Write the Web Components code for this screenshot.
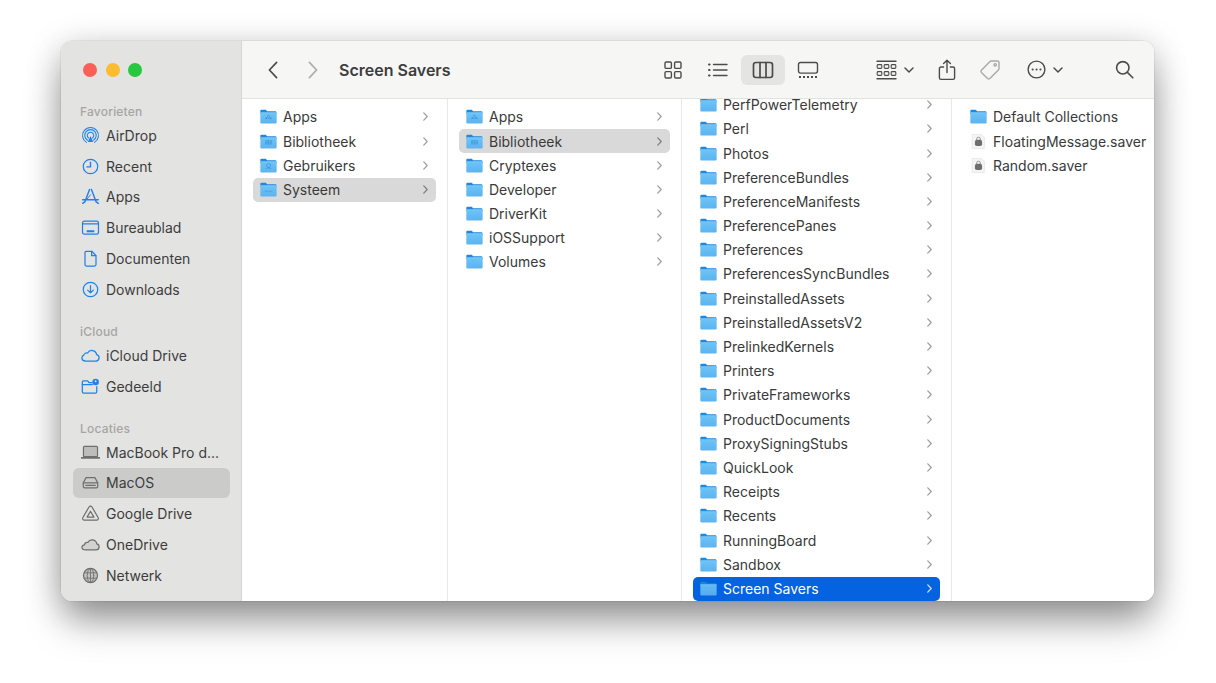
<!DOCTYPE html>
<html lang="nl">
<head>
<meta charset="utf-8">
<title>Screen Savers</title>
<style>
  html, body { margin: 0; height: 100%; background: #fff; overflow: hidden; }
  body { padding: 41px 0 0 61px; box-sizing: border-box; font-family: Inter, "Liberation Sans", sans-serif; }
</style>
</head>
<body>
<finder-window>
  <finder-sidebar slot="sidebar">
    <side-label first>Favorieten</side-label>
    <side-item icon="airdrop">AirDrop</side-item>
    <side-item icon="recent">Recent</side-item>
    <side-item icon="apps">Apps</side-item>
    <side-item icon="desktop">Bureaublad</side-item>
    <side-item icon="document">Documenten</side-item>
    <side-item icon="download">Downloads</side-item>
    <side-label>iCloud</side-label>
    <side-item icon="cloud">iCloud Drive</side-item>
    <side-item icon="shared">Gedeeld</side-item>
    <side-label>Locaties</side-label>
    <side-item icon="laptop" gray>MacBook Pro d...</side-item>
    <side-item icon="drive" gray selected>MacOS</side-item>
    <side-item icon="gdrive" gray>Google Drive</side-item>
    <side-item icon="onedrive" gray>OneDrive</side-item>
    <side-item icon="globe" gray>Netwerk</side-item>
  </finder-sidebar>
  <finder-toolbar slot="toolbar" title="Screen Savers"></finder-toolbar>
  <finder-column slot="columns" style="width:206px">
    <column-row glyph="apps">Apps</column-row>
    <column-row glyph="lib">Bibliotheek</column-row>
    <column-row glyph="user">Gebruikers</column-row>
    <column-row glyph="sys" selected="gray">Systeem</column-row>
  </finder-column>
  <finder-column slot="columns" style="width:234px">
    <column-row glyph="apps">Apps</column-row>
    <column-row glyph="lib" selected="gray">Bibliotheek</column-row>
    <column-row>Cryptexes</column-row>
    <column-row>Developer</column-row>
    <column-row>DriverKit</column-row>
    <column-row>iOSSupport</column-row>
    <column-row>Volumes</column-row>
  </finder-column>
  <finder-column slot="columns" style="width:270px" scrolled>
    <column-row>PerfPowerTelemetry</column-row>
    <column-row>Perl</column-row>
    <column-row>Photos</column-row>
    <column-row>PreferenceBundles</column-row>
    <column-row>PreferenceManifests</column-row>
    <column-row>PreferencePanes</column-row>
    <column-row>Preferences</column-row>
    <column-row>PreferencesSyncBundles</column-row>
    <column-row>PreinstalledAssets</column-row>
    <column-row>PreinstalledAssetsV2</column-row>
    <column-row>PrelinkedKernels</column-row>
    <column-row>Printers</column-row>
    <column-row>PrivateFrameworks</column-row>
    <column-row>ProductDocuments</column-row>
    <column-row>ProxySigningStubs</column-row>
    <column-row>QuickLook</column-row>
    <column-row>Receipts</column-row>
    <column-row>Recents</column-row>
    <column-row>RunningBoard</column-row>
    <column-row>Sandbox</column-row>
    <column-row selected="blue">Screen Savers</column-row>
  </finder-column>
  <finder-column slot="columns" last>
    <column-row leaf>Default Collections</column-row>
    <column-row leaf file>FloatingMessage.saver</column-row>
    <column-row leaf file>Random.saver</column-row>
  </finder-column>
</finder-window>

<script>
// sidebar + toolbar glyphs, all on a 20x20 box, stroke = currentColor
const ICONS = {
  airdrop: `<g fill="none" stroke-width="1.1"><path d="M5.8 17.200a8.400 8.400 0 1 1 8.400 0"/><path d="M7 15a6 6 0 1 1 6 0"/><path d="M8.200 12.800a3.400 3.400 0 1 1 3.600 0"/></g><path d="M10 10.400l2.800 6.400H7.200z" fill="currentColor" stroke="none"/>`,
  recent: `<circle cx="10" cy="10" r="7.600"/><path d="M10 5.400V10.400H6.200" stroke-width="1.500"/>`,
  apps: `<path d="M9 2.600L4 15.800M11 2.600l5 13.200M1.800 13.400h16.400M1.800 17.200l2.400-1.800M18.200 17.200l-2.400-1.800" stroke-width="1.500"/><path d="M5.800 13.400L10 8.200" stroke-width="1"/>`,
  desktop: `<rect x="1.600" y="3.200" width="16.800" height="13.800" rx="2"/><path d="M1.600 6.200h16.800"/><path d="M6 14h8" stroke-width="2.200" stroke-linecap="butt"/>`,
  document: `<path d="M5.400 2.400h6L15.800 7v9.400a1.600 1.600 0 0 1-1.600 1.600H5.800a1.600 1.600 0 0 1-1.600-1.600V3.600a1.200 1.200 0 0 1 1.200-1.200z"/><path d="M11.200 2.600V7h4.400"/>`,
  download: `<circle cx="10" cy="10" r="7.600"/><path d="M10 5.800v7.600M7 10.600l3 3 3-3"/>`,
  cloud: `<path d="M5 15.800h10.600a3.400 3.400 0 0 0 .8-6.700 5 5 0 0 0-9.400-1.700A3.200 3.200 0 0 0 3 9.600a3.100 3.100 0 0 0-2 2.900c0 1.900 1.800 3.300 4 3.300z"/>`,
  shared: `<path d="M11.800 6H8.400L7 4.200H2.800A1.400 1.400 0 0 0 1.400 5.600v10A1.400 1.400 0 0 0 2.800 17h12.400a1.400 1.400 0 0 0 1.400-1.400V10"/><path d="M1.400 8h10.600"/><circle cx="15.400" cy="5.200" r="3.400" fill="currentColor" stroke="none"/><circle cx="15.400" cy="4.500" r="1" fill="#e3e3e2" stroke="none"/>`,
  laptop: `<rect x="2.600" y="3.600" width="14.800" height="10.800" rx="1" fill="#bdbdbc"/><path d="M.6 15.600h18.800" stroke-width="1.800"/>`,
  drive: `<path d="M5.400 4.800h9.200l3 5.600v3.800a1.400 1.400 0 0 1-1.400 1.400H3.800a1.400 1.400 0 0 1-1.400-1.400v-3.800z"/><path d="M2.600 10.400h14.800"/><path d="M5 13h10" stroke-width="1.300"/>`,
  gdrive: `<path d="M8.400 3.200a1.800 1.800 0 0 1 3.200 0l6.400 11a1.800 1.800 0 0 1-1.600 2.800H3.600A1.800 1.800 0 0 1 2 14.200z"/><path d="M10 7.600l3.600 6.200H6.400z"/>`,
  onedrive: `<path d="M5 15.600h11a3.200 3.200 0 0 0 .6-6.300 5 5 0 0 0-9.400-1.500 3.200 3.200 0 0 0-3.600 2.500A2.800 2.800 0 0 0 1 12.800c0 1.600 1.600 2.800 4 2.800z" fill="#d2d2d1"/>`,
  globe: `<circle cx="10" cy="10" r="7.400" fill="#c2c2c1"/><ellipse cx="10" cy="10" rx="3.400" ry="7.400" stroke-width=".9"/><path d="M3.400 7.200h13.200M3.400 12.800h13.200M10 2.800v14.400" stroke-width=".9"/>`,
  back: `<path d="M8.600 2.400L1.400 10l7.200 7.600"/>`,
  forward: `<path d="M1.400 2.400L8.600 10l-7.200 7.600"/>`
}

// faint marks printed on some of the root folders
const FOLDER_GLYPHS = {
  apps: `<path d="M10 7l-3 5.400M10 7l3 5.400M6 11h8" stroke="#2a86d0" stroke-width=".8" fill="none" opacity=".75"/>`,
  lib: `<path d="M6 8h8M6 10h8M6 12h8M7 8v4M10 8v4M13 8v4" stroke="#2a86d0" stroke-width=".7" fill="none" opacity=".75"/>`,
  user: `<circle cx="10" cy="9" r="2.400" stroke="#2a86d0" stroke-width=".8" fill="none" opacity=".8"/><path d="M7 13c1-1.600 5-1.600 6 0" stroke="#2a86d0" stroke-width=".8" fill="none" opacity=".8"/>`,
  sys: `<path d="M5.500 11h9" stroke="#2a86d0" stroke-width="1" stroke-dasharray="1 .6" fill="none" opacity=".75"/>`
}

class FinderWindow extends HTMLElement {
  constructor() {
    super()
    this.attachShadow({ mode: 'open' }).innerHTML = `
      <style>
        :host {
          display: flex;
          width: 1093px;
          height: 560px;
          border-radius: 11px;
          background: #fff;
          box-shadow: 0 24px 38px -4px rgba(0,0,0,.34), 0 6px 34px rgba(0,0,0,.22), 0 0 0 .5px rgba(0,0,0,.1);
        }
        .frame { display: flex; width: 100%; height: 100%; border-radius: 11px; overflow: hidden; }
        .main { flex: 1; min-width: 0; display: flex; flex-direction: column; }
        .columns { flex: 1; min-height: 0; display: flex; }
      </style>
      <div class="frame">
        <slot name="sidebar"></slot>
        <div class="main">
          <slot name="toolbar"></slot>
          <div class="columns"><slot name="columns"></slot></div>
        </div>
      </div>`
  }
}

class FinderSidebar extends HTMLElement {
  constructor() {
    super()
    this.attachShadow({ mode: 'open' }).innerHTML = `
      <style>
        :host {
          display: block;
          flex: none;
          width: 181px;
          box-sizing: border-box;
          padding: 0 11px 0 12px;
          background: #e3e3e2;
          border-right: 1px solid #d6d6d5;
        }
        .lights { display: flex; gap: 8.500px; padding: 22px 0 0 10px; height: 14px; margin-bottom: 3px; }
        .lights i { width: 14px; height: 14px; border-radius: 50%; }
      </style>
      <div class="lights">
        <i style="background:#fc5f57"></i>
        <i style="background:#fdbb2e"></i>
        <i style="background:#27c73f"></i>
      </div>
      <slot></slot>`
  }
}

class SideLabel extends HTMLElement {
  constructor() {
    super()
    this.attachShadow({ mode: 'open' }).innerHTML = `
      <style>
        :host {
          display: block;
          height: 16px;
          margin-top: 19.200px;
          padding-left: 7px;
          font-size: 12px;
          font-weight: 500;
          letter-spacing: .2px;
          line-height: 16px;
          color: #a6a5a4;
        }
        :host([first]) { margin-top: 27px; }
      </style>
      <slot></slot>`
  }
}

class SideItem extends HTMLElement {
  constructor() {
    super()
    this.attachShadow({ mode: 'open' }).innerHTML = `
      <style>
        :host {
          display: flex;
          align-items: center;
          gap: 6px;
          height: 30.800px;
          padding-left: 8px;
          border-radius: 6px;
          font-size: 14px;
          color: #3d3d3d;
          white-space: nowrap;
        }
        :host([selected]) { background: #cbcbca; }
        svg {
          width: 19px;
          height: 19px;
          flex: none;
          fill: none;
          stroke: #1d82ea;
          color: #1d82ea;
          stroke-width: 1.300;
          stroke-linecap: round;
          stroke-linejoin: round;
        }
        :host([gray]) svg { stroke: #6f6f6e; color: #6f6f6e; }
      </style>
      <svg viewBox="0 0 20 20">${ICONS[this.getAttribute('icon')]}</svg>
      <slot></slot>`
  }
}

class FinderToolbar extends HTMLElement {
  constructor() {
    super()
    const chevron = `<svg class="chev" viewBox="0 0 10 6"><path d="M1 1l4 4 4-4"/></svg>`
    this.attachShadow({ mode: 'open' }).innerHTML = `
      <style>
        :host {
          display: flex;
          align-items: center;
          flex: none;
          height: 58px;
          box-sizing: border-box;
          padding-left: 26px;
          background: #f6f6f5;
          border-bottom: 1px solid #e2e2e1;
          color: #4c4c4c;
        }
        svg { display: block; fill: none; stroke: currentColor; stroke-width: 1.400; stroke-linecap: round; stroke-linejoin: round; }
        .nav { width: 10px; height: 20px; stroke-width: 1.700; }
        .nav.off { color: #adadad; margin-left: 30px; }
        h1 {
          margin: 0 0 0 21px;
          flex: 1;
          font-size: 16px;
          font-weight: 600;
          color: #3d3d3d;
        }
        .tools { display: flex; align-items: center; }
        .btn { display: flex; align-items: center; justify-content: center; height: 30px; }
        .active { background: #e4e4e3; border-radius: 6px; }
        .chev { width: 10px; height: 6px; stroke-width: 1.500; margin-left: 7px; }
      </style>
      <svg class="nav" viewBox="0 0 10 20">${ICONS.back}</svg>
      <svg class="nav off" viewBox="0 0 10 20">${ICONS.forward}</svg>
      <h1>${this.getAttribute('title')}</h1>
      <div class="tools">
        <div class="btn" style="width:18px"><svg width="18" height="18" viewBox="0 0 18 18"><rect x="1" y="1" width="6.400" height="6.400" rx="1.200"/><rect x="10.600" y="1" width="6.400" height="6.400" rx="1.200"/><rect x="1" y="10.600" width="6.400" height="6.400" rx="1.200"/><rect x="10.600" y="10.600" width="6.400" height="6.400" rx="1.200"/></svg></div>
        <div class="btn" style="width:20px;margin-left:26px"><svg width="20" height="16" viewBox="0 0 20 16"><path d="M5.500 2.500H19M5.500 8H19M5.500 13.500H19"/><path d="M1 2.500h.6M1 8h.6M1 13.500h.6" stroke-width="2"/></svg></div>
        <div class="btn active" style="width:44px;margin-left:13px"><svg width="22" height="18" viewBox="0 0 22 18"><rect x="1.500" y="1.500" width="19" height="15" rx="2.400" stroke-width="1.700"/><path d="M8 1.500v15M14 1.500v15" stroke-width="1.700"/></svg></div>
        <div class="btn" style="width:22px;margin-left:12px"><svg width="22" height="18" viewBox="0 0 22 18"><rect x="1.500" y="1.500" width="19" height="10.600" rx="2"/><path d="M2 16h18" stroke-width="1.800" stroke-dasharray="2 2" stroke-linecap="butt"/></svg></div>
        <div class="btn" style="margin-left:57px"><svg width="21" height="20" viewBox="0 0 21 20"><path d="M1 1.200h19M1 18.800h19"/><rect x="1.200" y="4.600" width="4.600" height="3.800" rx=".9" stroke-width="1.100"/><rect x="8.200" y="4.600" width="4.600" height="3.800" rx=".9" stroke-width="1.100"/><rect x="15.200" y="4.600" width="4.600" height="3.800" rx=".9" stroke-width="1.100"/><rect x="1.200" y="11.600" width="4.600" height="3.800" rx=".9" stroke-width="1.100"/><rect x="8.200" y="11.600" width="4.600" height="3.800" rx=".9" stroke-width="1.100"/><rect x="15.200" y="11.600" width="4.600" height="3.800" rx=".9" stroke-width="1.100"/></svg>${chevron}</div>
        <div class="btn" style="margin-left:24px"><svg width="18" height="22" viewBox="0 0 18 22"><path d="M5.600 8H3a1.600 1.600 0 0 0-1.600 1.600v9.200A1.600 1.600 0 0 0 3 20.400h12a1.600 1.600 0 0 0 1.600-1.600V9.600A1.600 1.600 0 0 0 15 8h-2.600"/><path d="M9 13.600V1.400M5.600 4.600L9 1.200l3.400 3.400"/></svg></div>
        <div class="btn" style="margin-left:23px;color:#a9a9a9"><svg width="22" height="22" viewBox="0 0 22 22"><path d="M12.400 2h6a1.600 1.600 0 0 1 1.600 1.600v6a2 2 0 0 1-.6 1.400l-8.600 8.600a1.600 1.600 0 0 1-2.200 0l-6.200-6.200a1.600 1.600 0 0 1 0-2.200L11 2.600A2 2 0 0 1 12.400 2z"/><circle cx="16.200" cy="5.800" r="1.200"/></svg></div>
        <div class="btn" style="margin-left:26px"><svg width="19" height="19" viewBox="0 0 19 19"><circle cx="9.500" cy="9.500" r="8.400"/><path d="M5.600 9.500h.1M9.500 9.500h.1M13.400 9.500h.1" stroke-width="2"/></svg>${chevron}</div>
        <div class="btn" style="margin:0 20px 0 52px"><svg width="19" height="19" viewBox="0 0 19 19" style="stroke-width:1.600"><circle cx="7.800" cy="7.800" r="6.200"/><path d="M12.400 12.400l5.400 5.400"/></svg></div>
      </div>`
  }
}

class FinderColumn extends HTMLElement {
  constructor() {
    super()
    this.attachShadow({ mode: 'open' }).innerHTML = `
      <style>
        :host {
          display: block;
          flex: none;
          box-sizing: border-box;
          height: 100%;
          overflow: hidden;
          background: #fff;
          border-right: 1px solid #e8e8e8;
          padding: 6px 11px 0;
        }
        :host([scrolled]) { padding-top: 0; }
        :host([scrolled]) .list { margin-top: -6.200px; }
        :host([last]) { flex: 1; border-right: 0; }
      </style>
      <div class="list"><slot></slot></div>`
  }
}

class ColumnRow extends HTMLElement {
  constructor() {
    super()
    const leaf = this.hasAttribute('leaf')
    const file = this.hasAttribute('file')
    const glyph = FOLDER_GLYPHS[this.getAttribute('glyph')] || ''
    const id = 'f' + Math.random().toString(36).slice(2, 8)
    const folder = `
      <svg class="icon" viewBox="0 0 20 18" preserveAspectRatio="none">
        <defs><linearGradient id="${id}" x1="0" y1="0" x2="0" y2="1"><stop offset="0" stop-color="#6cc4f7"/><stop offset="1" stop-color="#5db3ef"/></linearGradient></defs>
        <path d="M1.600 1h5.200l1.600 1.700h9.600a1.400 1.400 0 0 1 1.400 1.400V6H.4V2.200A1.200 1.200 0 0 1 1.600 1z" fill="#1f87dc"/>
        <path d="M.4 4.400h19.200v11.800a1.300 1.300 0 0 1-1.300 1.300H1.700A1.300 1.300 0 0 1 .4 16.200z" fill="url(#${id})"/>
        <path d="M.4 4.400h19.200" stroke="#a6dcfb" stroke-width=".7"/>
        ${glyph}
      </svg>`
    const saver = `
      <svg class="icon" viewBox="0 0 20 18" preserveAspectRatio="none">
        <path d="M3 .4h10l4 3.600v13a.6.6 0 0 1-.6.6H3a.6.6 0 0 1-.6-.6V1a.6.6 0 0 1 .6-.6z" fill="#f4f4f4" stroke="#dedede" stroke-width=".6"/>
        <rect x="5.800" y="7" width="8.400" height="7.500" rx="2.200" fill="#6d6d6d"/>
        <path d="M7.800 7.400V6a2.200 2.200 0 0 1 4.400 0v1.400" fill="none" stroke="#8a8a8a" stroke-width="1"/>
      </svg>`
    this.attachShadow({ mode: 'open' }).innerHTML = `
      <style>
        :host {
          display: flex;
          align-items: center;
          height: 24.200px;
          box-sizing: border-box;
          padding: 0 8px .5px 7px;
          border-radius: 5px;
          font-size: 14px;
          color: #3a3a3a;
          white-space: nowrap;
        }
        :host([selected="gray"]) { background: #d9d9d9; }
        :host([selected="blue"]) { background: #0562e0; color: #fff; }
        .icon { width: 17px; height: 15px; flex: none; margin-right: 6px; }
        .label { flex: 1; }
        .chev { width: 5px; height: 9px; flex: none; fill: none; stroke: #9e9e9e; stroke-width: 1.200; stroke-linecap: round; stroke-linejoin: round; }
        :host([selected="gray"]) .chev { stroke: #7e7e7e; }
        :host([selected="blue"]) .chev { stroke: #d5e4fa; }
        :host([selected="blue"]) .icon { opacity: .9; }
      </style>
      ${file ? saver : folder}
      <span class="label"><slot></slot></span>
      ${leaf ? '' : '<svg class="chev" viewBox="0 0 5 9"><path d="M.8 .8L4.200 4.500.8 8.200"/></svg>'}`
  }
}

customElements.define('finder-window', FinderWindow)
customElements.define('finder-sidebar', FinderSidebar)
customElements.define('side-label', SideLabel)
customElements.define('side-item', SideItem)
customElements.define('finder-toolbar', FinderToolbar)
customElements.define('finder-column', FinderColumn)
customElements.define('column-row', ColumnRow)
</script>
</body>
</html>
